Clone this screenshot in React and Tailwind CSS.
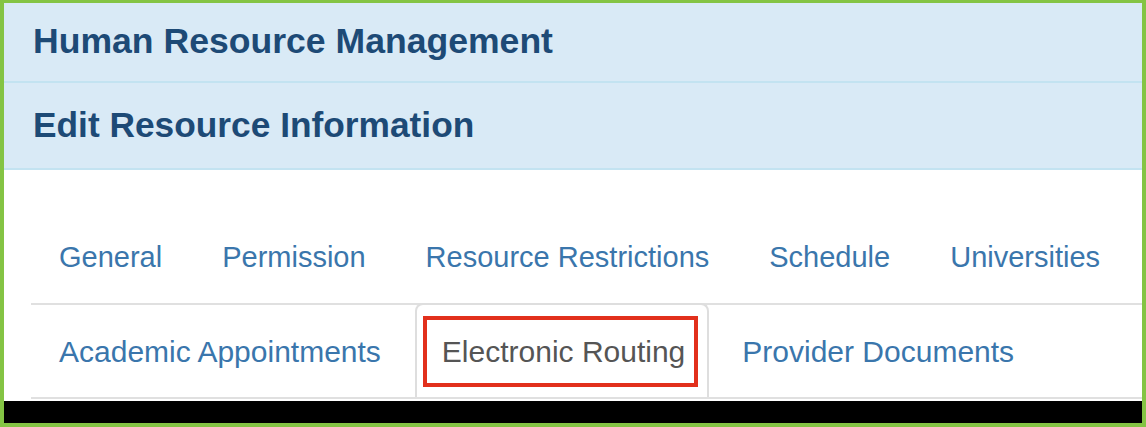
import React from "react";

const topTabs = ["General", "Permission", "Resource Restrictions", "Schedule", "Universities"];

const bottomTabs = [
  { label: "Academic Appointments" },
  { label: "Electronic Routing", active: true },
  { label: "Provider Documents" },
];

const ActiveTab = ({ label }) => (
  <li className="-mt-[2px] h-[94px] pl-[6px] pr-[9px] mr-[5px] flex items-center bg-white border-2 border-b-0 border-[#dedede] rounded-t-[8px]">
    <span className="h-[71px] pl-[15px] pr-[9px] flex items-center border-[4px] border-[#e2301c] text-[30px] text-[#555] whitespace-nowrap">
      {label}
    </span>
  </li>
);

export default function App() {
  return (
    <div
      className="w-[1146px] h-[427px] bg-[#84c444] pt-[3px] pb-[4px] px-[4px] overflow-hidden"
      style={{ fontFamily: '"Liberation Sans", Arial, sans-serif' }}
    >
      <div className="h-full bg-white flex flex-col">
        <div className="h-[80px] bg-[#d9eaf6] border-b-2 border-[#c3e3f1] px-[29px] flex items-center">
          <h1 className="text-[35.6px] font-bold text-[#1d4a76]">Human Resource Management</h1>
        </div>
        <div className="h-[87px] bg-[#d9eaf6] border-b-2 border-[#c3e3f1] px-[29px] flex items-center">
          <h2 className="text-[35.3px] font-bold text-[#1d4a76]">Edit Resource Information</h2>
        </div>

        <div className="flex-1 pt-[42px] pl-[27px]">
          <ul className="flex border-b-2 border-[#e0e0e0]">
            {topTabs.map((t) => (
              <li
                key={t}
                className="h-[91px] px-[28px] mr-[4px] flex items-center text-[29px] text-[#3a76ac] whitespace-nowrap"
              >
                {t}
              </li>
            ))}
          </ul>
          <ul className="flex border-b-2 border-[#e0e0e0]">
            {bottomTabs.map((t) =>
              t.active ? (
                <ActiveTab key={t.label} label={t.label} />
              ) : (
                <li
                  key={t.label}
                  className="h-[92px] px-[28px] mr-[6px] flex items-center text-[30px] text-[#3a76ac] whitespace-nowrap"
                >
                  {t.label}
                </li>
              )
            )}
          </ul>
        </div>

        <div className="h-[22px] bg-black" />
      </div>
    </div>
  );
}
